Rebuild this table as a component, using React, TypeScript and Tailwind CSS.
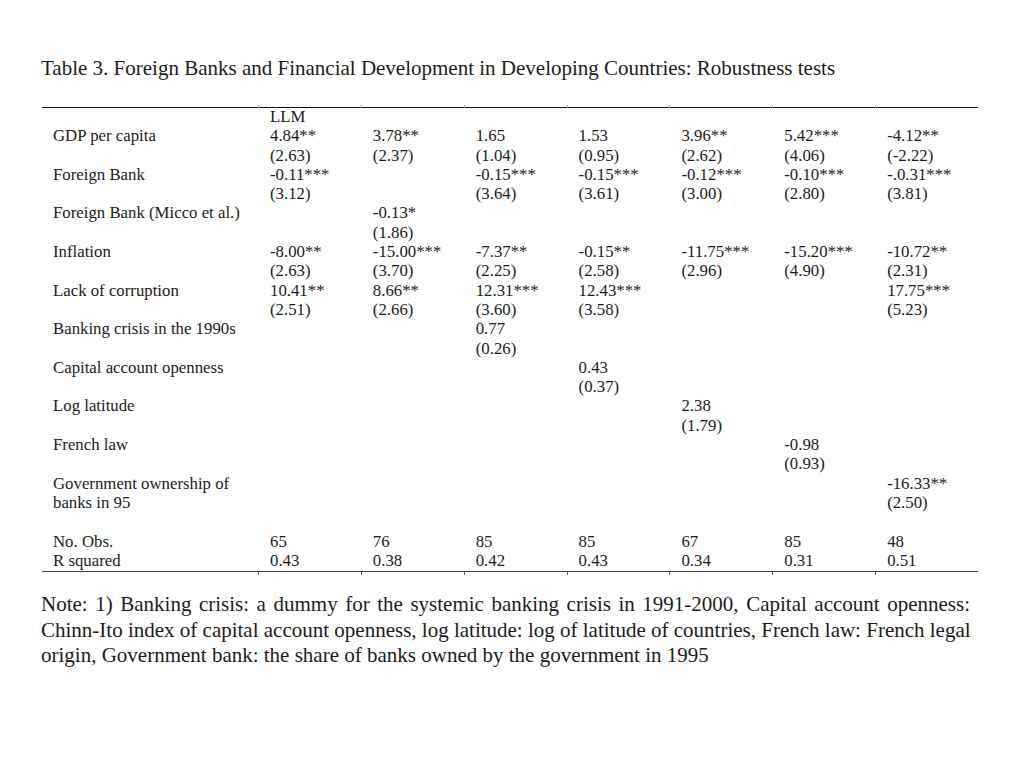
import React from "react";

type Cell = string[];

const rows: { label: string[]; cells: Cell[] }[] = [
  {
    label: ["GDP per capita"],
    cells: [
      ["4.84**", "(2.63)"],
      ["3.78**", "(2.37)"],
      ["1.65", "(1.04)"],
      ["1.53", "(0.95)"],
      ["3.96**", "(2.62)"],
      ["5.42***", "(4.06)"],
      ["-4.12**", "(-2.22)"],
    ],
  },
  {
    label: ["Foreign Bank"],
    cells: [
      ["-0.11***", "(3.12)"],
      [],
      ["-0.15***", "(3.64)"],
      ["-0.15***", "(3.61)"],
      ["-0.12***", "(3.00)"],
      ["-0.10***", "(2.80)"],
      ["-.0.31***", "(3.81)"],
    ],
  },
  {
    label: ["Foreign Bank (Micco et al.)"],
    cells: [[], ["-0.13*", "(1.86)"], [], [], [], [], []],
  },
  {
    label: ["Inflation"],
    cells: [
      ["-8.00**", "(2.63)"],
      ["-15.00***", "(3.70)"],
      ["-7.37**", "(2.25)"],
      ["-0.15**", "(2.58)"],
      ["-11.75***", "(2.96)"],
      ["-15.20***", "(4.90)"],
      ["-10.72**", "(2.31)"],
    ],
  },
  {
    label: ["Lack of corruption"],
    cells: [
      ["10.41**", "(2.51)"],
      ["8.66**", "(2.66)"],
      ["12.31***", "(3.60)"],
      ["12.43***", "(3.58)"],
      [],
      [],
      ["17.75***", "(5.23)"],
    ],
  },
  {
    label: ["Banking crisis in the 1990s"],
    cells: [[], [], ["0.77", "(0.26)"], [], [], [], []],
  },
  {
    label: ["Capital account openness"],
    cells: [[], [], [], ["0.43", "(0.37)"], [], [], []],
  },
  {
    label: ["Log latitude"],
    cells: [[], [], [], [], ["2.38", "(1.79)"], [], []],
  },
  {
    label: ["French law"],
    cells: [[], [], [], [], [], ["-0.98", "(0.93)"], []],
  },
  {
    label: ["Government ownership of", "banks in 95"],
    cells: [[], [], [], [], [], [], ["-16.33**", "(2.50)"]],
  },
];

const obs = ["65", "76", "85", "85", "67", "85", "48"];
const rsq = ["0.43", "0.38", "0.42", "0.43", "0.34", "0.31", "0.51"];

function Ticks({ top }: { top?: boolean }) {
  return (
    <div className="grid grid-cols-[216px_repeat(7,1fr)] h-[3px]">
      <div />
      {obs.map((_, i) => (
        <div
          key={i}
          className={top ? "border-l border-[#9a9a9a]" : "border-l border-[#555]"}
        />
      ))}
    </div>
  );
}

function Line({ children }: { children?: React.ReactNode }) {
  return <div className="h-[19.3px] leading-[19.3px] whitespace-nowrap">{children}</div>;
}

export default function App() {
  return (
    <div
      className="w-[1024px] h-[768px] bg-white text-[#1c1c1c] pt-[56px]"
      style={{ fontFamily: '"Liberation Serif", "Times New Roman", serif' }}
    >
      <h1 className="ml-[41px] text-[21px] leading-[24px]">
        Table 3. Foreign Banks and Financial Development in Developing Countries: Robustness tests
      </h1>

      <div className="ml-[42px] w-[936px] mt-[27px] text-[16.8px]">
        <div className="border-t-[1.5px] border-[#111]" />
        <div className="-mt-[3px] mb-[-1px]">
          <Ticks top />
        </div>

        <div className="grid grid-cols-[216px_repeat(7,1fr)]">
          <div />
          <div className="pl-[12px]">
            <Line>LLM</Line>
          </div>
          <div className="col-span-6" />

          {rows.map((r, i) => (
            <React.Fragment key={i}>
              <div className="pl-[11px]">
                {r.label.map((l, j) => (
                  <Line key={j}>{l}</Line>
                ))}
                {r.label.length < 2 && <Line />}
              </div>
              {r.cells.map((c, j) => (
                <div key={j} className="pl-[12px]">
                  {c.map((v, k) => (
                    <Line key={k}>{v}</Line>
                  ))}
                </div>
              ))}
            </React.Fragment>
          ))}

          <div className="col-span-8">
            <Line />
          </div>

          <div className="pl-[11px]">
            <Line>No. Obs.</Line>
            <Line>R squared</Line>
          </div>
          {obs.map((o, j) => (
            <div key={j} className="pl-[12px]">
              <Line>{o}</Line>
              <Line>{rsq[j]}</Line>
            </div>
          ))}
        </div>

        <div className="mt-[1px] border-t-[1.5px] border-[#444]" />
        <Ticks />
      </div>

      <div className="ml-[41px] mt-[17px] w-[929px] text-[21px] leading-[25.5px]">
        <p className="text-justify [text-align-last:justify] whitespace-nowrap">
          Note: 1) Banking crisis: a dummy for the systemic banking crisis in 1991-2000, Capital account openness:
        </p>
        <p className="text-justify [text-align-last:justify] whitespace-nowrap">
          Chinn-Ito index of capital account openness, log latitude: log of latitude of countries, French law: French legal
        </p>
        <p className="whitespace-nowrap">
          origin, Government bank: the share of banks owned by the government in 1995
        </p>
      </div>
    </div>
  );
}
